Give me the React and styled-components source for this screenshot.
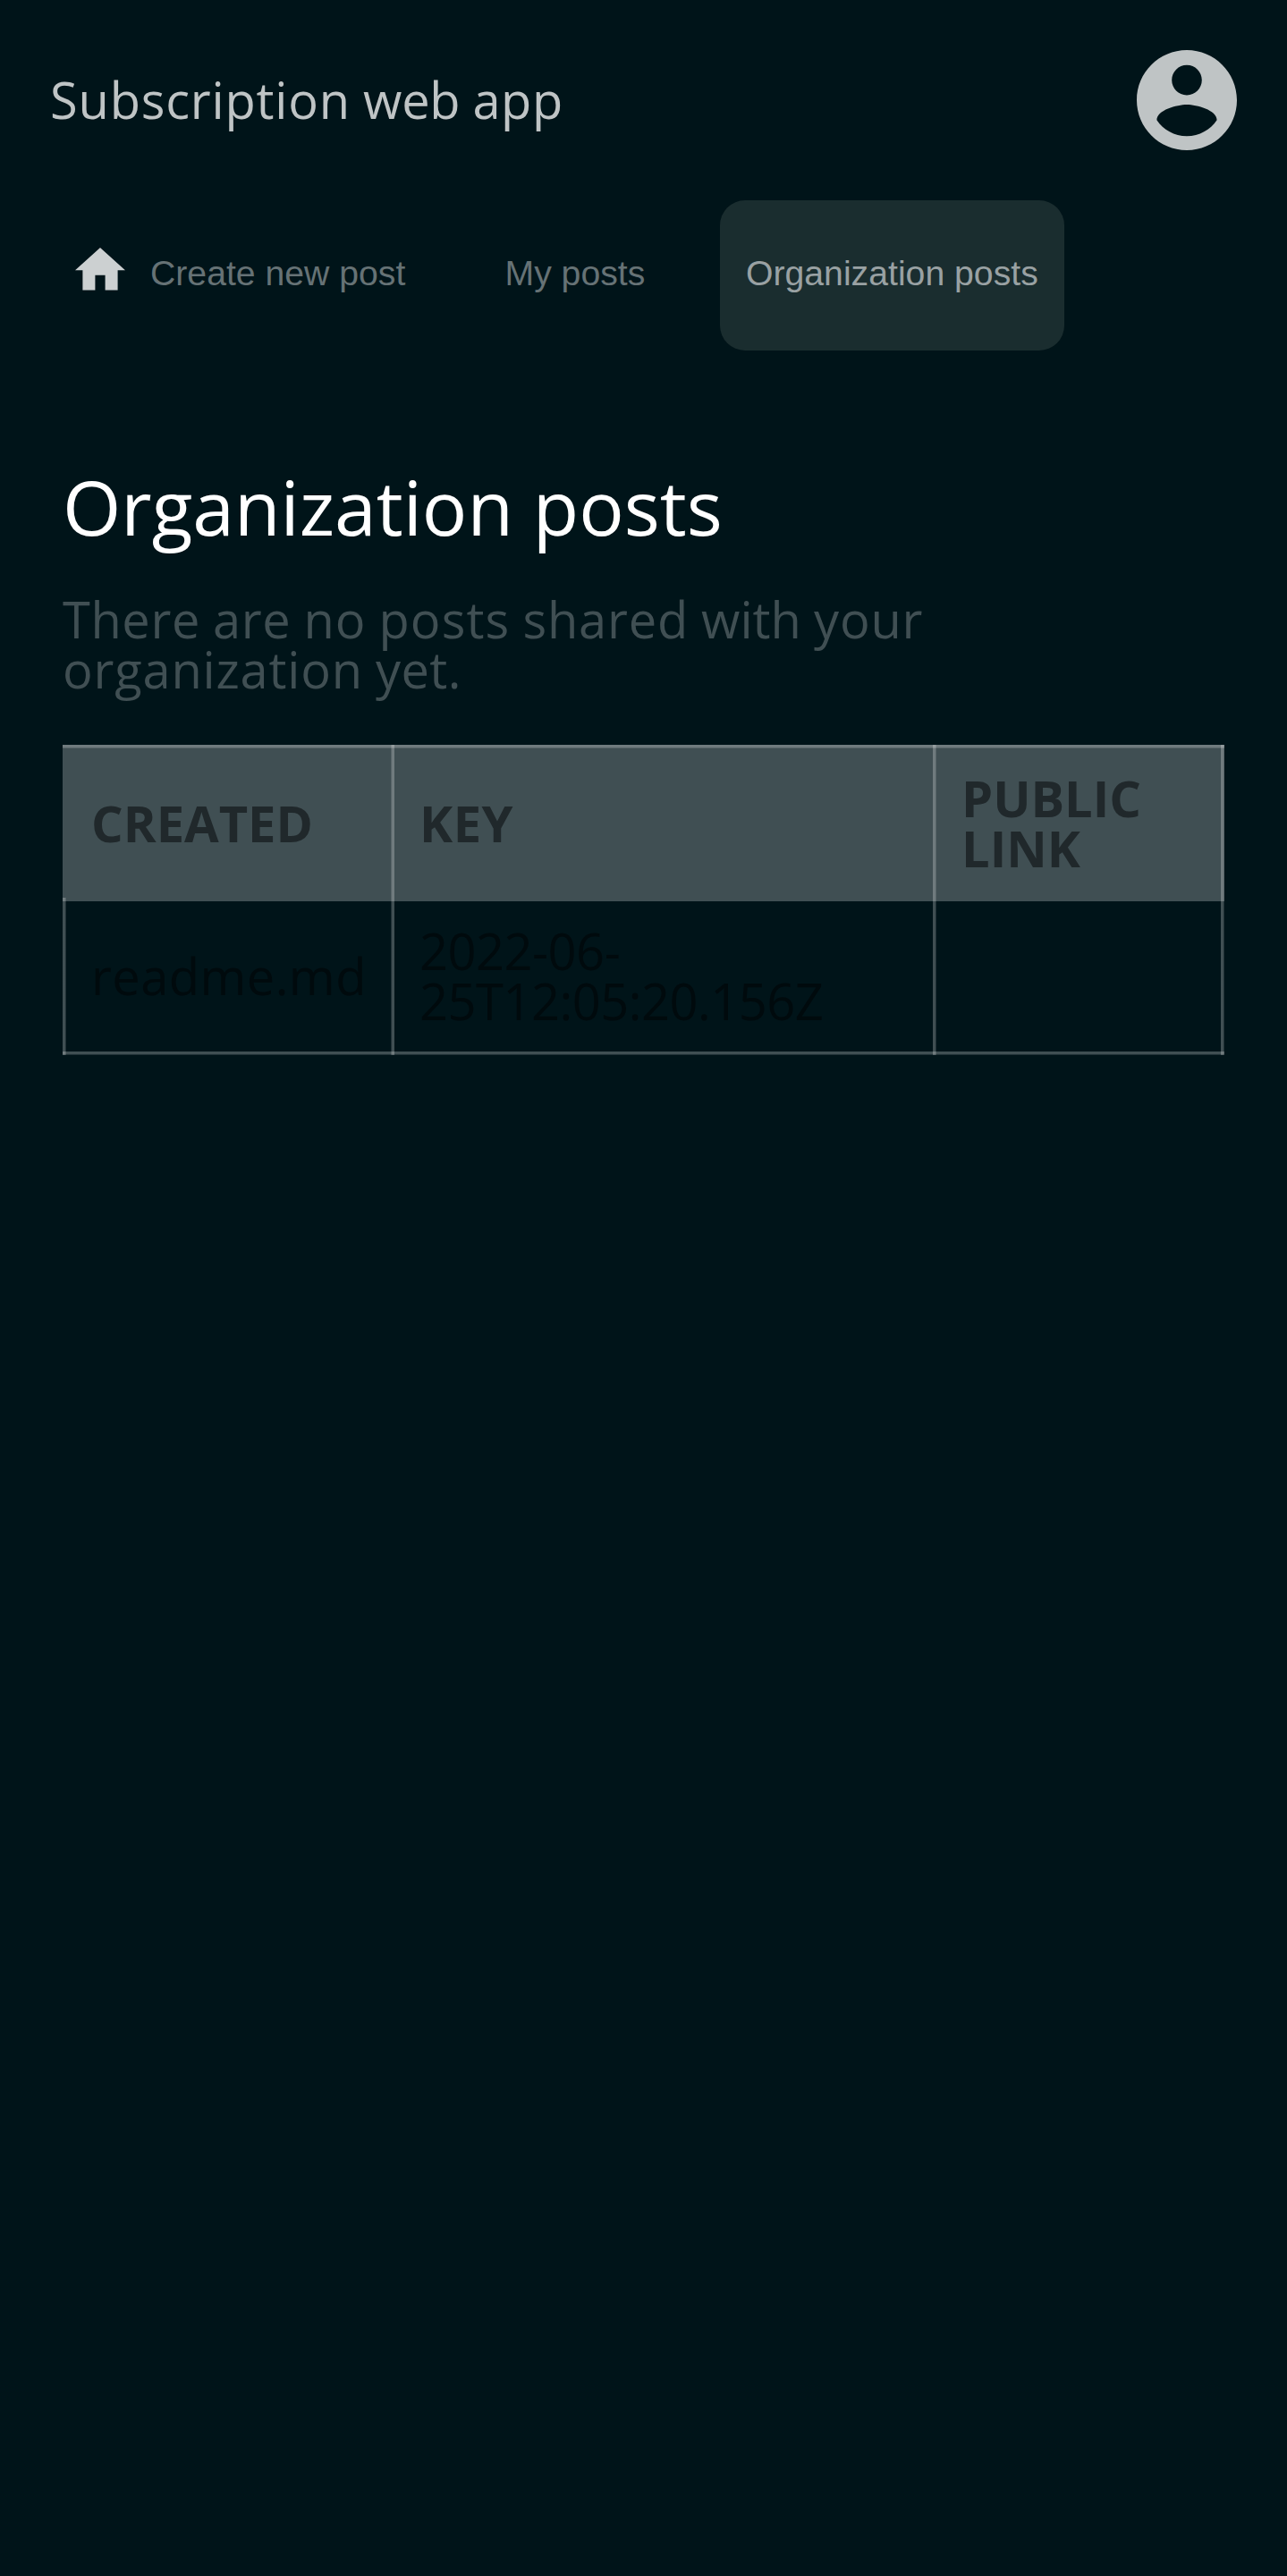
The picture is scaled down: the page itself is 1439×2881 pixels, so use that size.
import React from "react";
import styled, { createGlobalStyle, css } from "styled-components";

const ink = "rgba(255, 255, 255, 0.25)";
const faint = "rgba(255, 255, 255, 0.125)";

const Global = createGlobalStyle`
  * { box-sizing: border-box; }
  body { margin: 0; background: #001419; }
`;
const Page = styled.div`
  display: flex;
  flex-direction: column;
  min-height: 2881px;
  font-family: "Open Sans", sans-serif;
  font-size: 56px;
  line-height: 56px;
  word-spacing: -0.5px;
  color: #000a0d;
`;
const Header = styled.header`
  display: flex;
  justify-content: space-between;
  align-items: center;
  height: 224px;
  padding: 0 56px;
`;
const Brand = styled.div`
  padding-bottom: 2px;
  color: #bfc4c5;
`;
const Word = styled.span`
  letter-spacing: ${(p) => p.$track}px;
`;
const Icon = styled.svg`
  display: block;
  flex: none;
  fill: currentColor;
`;
const Avatar = styled(Icon)`
  width: 112px;
  height: 112px;
  margin-right: 0.5px;
  color: #bfc4c5;
`;
const HomeIcon = styled(Icon)`
  width: 56px;
  height: 47.6px;
  margin: 0 28px 9px 0;
  color: #ccd0d1;
`;
const Nav = styled.nav`
  display: flex;
  gap: 56px;
  height: 168px;
  padding-left: 56px;
`;
const Tab = styled.a`
  display: flex;
  align-items: center;
  width: ${(p) => p.$width}px;
  padding: 0 0 5px ${(p) => (p.$active ? 29 : 28)}px;
  border-radius: 28px;
  font-family: "Liberation Sans", Arial, sans-serif;
  font-size: 39.2px;
  word-spacing: 0;
  white-space: nowrap;
  color: ${(p) => (p.$active ? "#99a1a3" : "#667275")};
  background: ${(p) => (p.$active ? "#1a2d2f" : "transparent")};
`;
const Main = styled.main`
  padding: 126px 70px 0;
`;
const Title = styled.h1`
  margin: 0;
  font-size: 84px;
  line-height: 97px;
  font-weight: 400;
  word-spacing: 0;
  color: #fff;
`;
const Subtitle = styled.p`
  margin: 49px 0 57px;
  width: 1050px;
  color: #404f53;
`;

const Table = styled.div`
  width: 1299px;
`;
const columnRules = css`
  transparent 4px 367px, ${faint} 367px 368px, ${ink} 368px 371px,
  transparent 371px 973px, ${ink} 973px 976px, ${faint} 976px 977px,
  transparent 977px 1295px, ${ink} 1295px 1298px, ${faint} 1298px
`;
const Row = styled.div`
  display: grid;
  grid-template-columns: 367px 606px 326px;
  align-items: center;
`;
const HeadRow = styled(Row)`
  height: 175px;
  padding-bottom: 1px;
  font-weight: 700;
  text-transform: uppercase;
  color: #20282b;
  background:
    linear-gradient(90deg, ${ink} 3px, ${faint} 3px 4px, transparent 4px) 0 100% / 4px 4px no-repeat,
    linear-gradient(${ink} 3px, ${faint} 3px 4px, transparent 4px),
    linear-gradient(90deg, transparent 4px, ${columnRules}),
    #404f53;
`;
const BodyRow = styled(Row)`
  height: 172px;
  padding-bottom: 6px;
  background:
    linear-gradient(0deg, ${faint} 1px, ${ink} 1px 4px, transparent 4px),
    linear-gradient(90deg, ${ink} 3px, ${faint} 3px 4px, ${columnRules});
`;
const Cell = styled.div`
  padding: 0 28px 0 32px;
`;

const brand = [["Subscription", 0.81], ["web", -0.26], ["app", 0.58]];
const notice = [
  ["There", 0.59], ["are", 0.69], ["no", 0.91], ["posts", 1.14], ["shared", 0.78],
  ["with", 0.04], ["your", 0.81], ["organization", 0.82], ["yet.", 0.4],
];

function Words({ list }) {
  return list.map(([word, track], i) => (
    <React.Fragment key={i}>
      {i > 0 && " "}
      <Word $track={track}>{word}</Word>
    </React.Fragment>
  ));
}

export default function App() {
  return (
    <Page>
      <Global />
      <Header>
        <Brand><Words list={brand} /></Brand>
        <Avatar viewBox="2 2 20 20">
          <path d="M12 2C6.48 2 2 6.48 2 12s4.48 10 10 10 10-4.48 10-10S17.52 2 12 2zm0 3c1.66 0 3 1.34 3 3s-1.34 3-3 3-3-1.34-3-3 1.34-3 3-3zm0 14.2c-2.5 0-4.71-1.28-6-3.22.03-1.99 4-3.08 6-3.08 1.99 0 5.97 1.09 6 3.08-1.29 1.94-3.5 3.22-6 3.22z" />
        </Avatar>
      </Header>
      <Nav>
        <Tab $width={424.5}>
          <HomeIcon viewBox="2 3 20 17">
            <path d="M10 20v-6h4v6h5v-8h3L12 3 2 12h3v8z" />
          </HomeIcon>
          Create new post
        </Tab>
        <Tab $width={212.5}>My posts</Tab>
        <Tab $width={385} $active>Organization posts</Tab>
      </Nav>
      <Main>
        <Title>Organization posts</Title>
        <Subtitle><Words list={notice} /></Subtitle>
        <Table role="table">
          <HeadRow role="row">
            <Cell role="columnheader">Created</Cell>
            <Cell role="columnheader"><Word $track={0.5}>Key</Word></Cell>
            <Cell role="columnheader">Public link</Cell>
          </HeadRow>
          <BodyRow role="row">
            <Cell role="cell"><Word $track={0.45}>readme.md</Word></Cell>
            <Cell role="cell"><Word $track={-0.5}>2022-06-25T12:05:20.156Z</Word></Cell>
            <Cell role="cell" />
          </BodyRow>
        </Table>
      </Main>
    </Page>
  );
}
